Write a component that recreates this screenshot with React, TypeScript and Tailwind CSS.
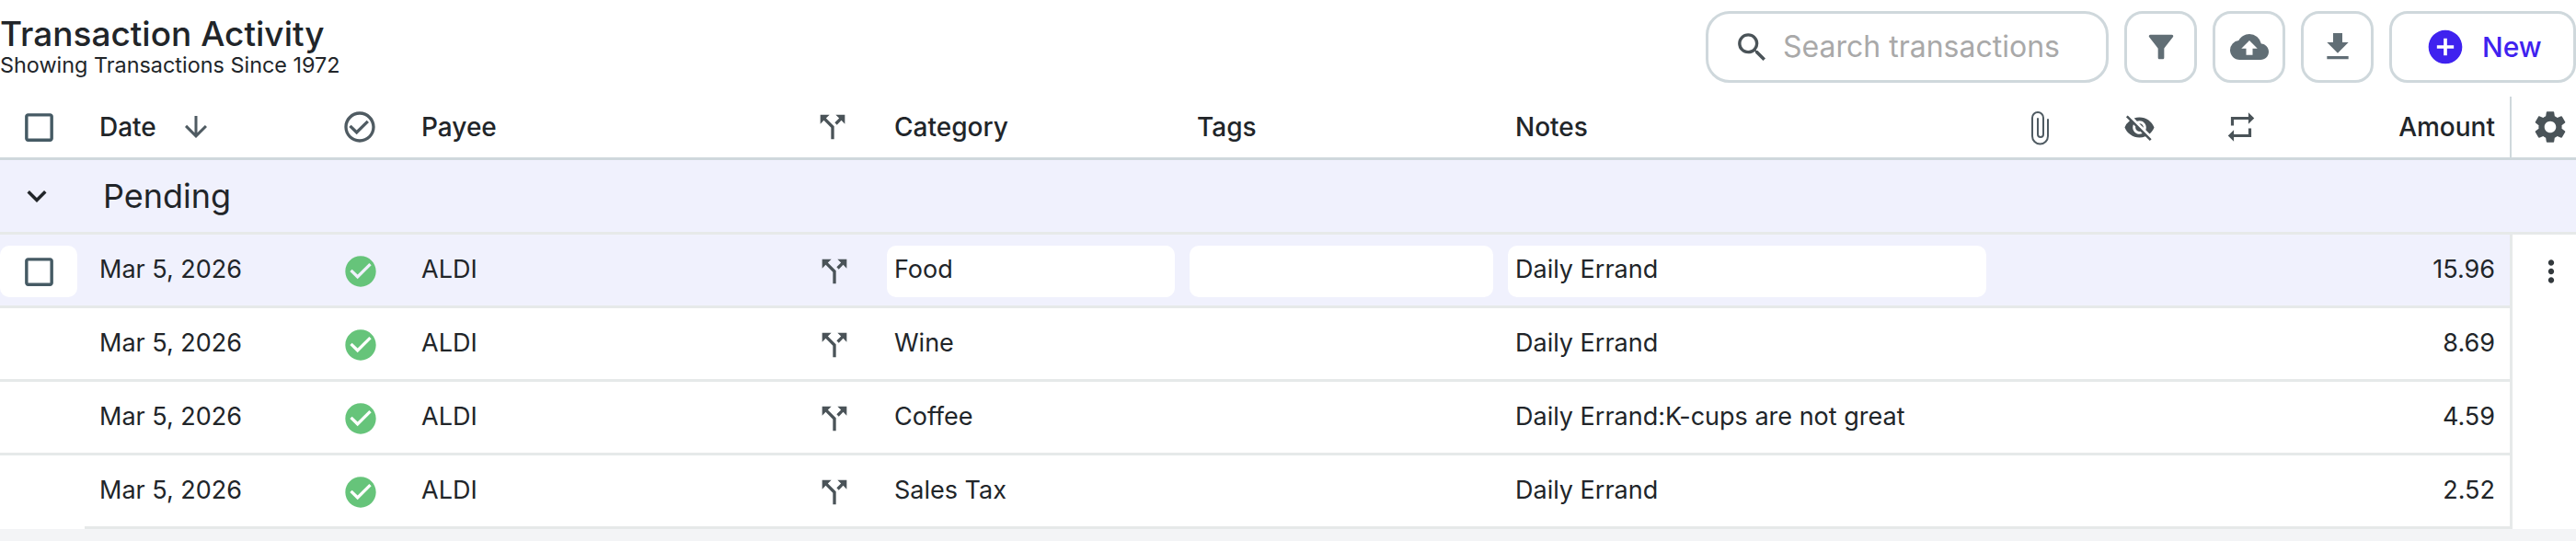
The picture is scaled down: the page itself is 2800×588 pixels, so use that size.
import React from 'react';
import {
    MdAddCircle,
    MdArrowDownward,
    MdCallSplit,
    MdCheckCircle,
    MdCheckCircleOutline,
    MdCloudUpload,
    MdExpandMore,
    MdFileDownload,
    MdFilterAlt,
    MdMoreVert,
    MdOutlineCheckBoxOutlineBlank,
    MdRepeat,
    MdSearch,
    MdSettings,
    MdVisibilityOff,
} from 'react-icons/md';

interface Row {
    category: string;
    notes: string;
    amount: string;
}

const rows: Row[] = [
    { category: 'Food', notes: 'Daily Errand', amount: '15.96' },
    { category: 'Wine', notes: 'Daily Errand', amount: '8.69' },
    { category: 'Coffee', notes: 'Daily Errand:K-cups are not great', amount: '4.59' },
    { category: 'Sales Tax', notes: 'Daily Errand', amount: '2.52' },
];

const columns =
    'grid grid-cols-[92px_268px_66px_434px_96px_329px_346px_536px_100px_116px_107px_238px_72px]';

const Paperclip: React.FC = () => (
    <svg width="21" height="38" viewBox="0 0 21 38" fill="none" stroke="#4f5b62" strokeWidth="2" strokeLinecap="round">
        <path d="M19 10v18a8.5 8.5 0 0 1-17 0V8a6 6 0 0 1 12 0v18a3 3 0 0 1-6 0V9" />
    </svg>
);

const ToolButton: React.FC<{ children: React.ReactNode }> = ({ children }) => (
    <button className="flex h-[78px] w-[79px] items-center justify-center rounded-[20px] border-[3px] border-[#cfd8dc] bg-white text-[#616e75]">
        {children}
    </button>
);

const Header: React.FC = () => (
    <div className={`${columns} h-[69px] items-center border-b-[3px] border-[#cfd8dc] text-[28px] font-medium text-[#212529]`}>
        <div className="flex justify-center pr-[8px] text-[#455a64]">
            <MdOutlineCheckBoxOutlineBlank size={41} />
        </div>
        <div className="flex items-center gap-[25px] pl-[16px]">
            Date
            <MdArrowDownward size={36} className="text-[#4f5b62]" />
        </div>
        <div className="flex justify-center pr-[4px] text-[#4f5b62]">
            <MdCheckCircleOutline size={40} />
        </div>
        <div className="pl-[32px]">Payee</div>
        <div className="flex justify-center pr-[6px] text-[#4a5358]">
            <MdCallSplit size={40} />
        </div>
        <div className="pl-[16px]">Category</div>
        <div className="pl-[16px]">Tags</div>
        <div className="pl-[16px]">Notes</div>
        <div className="flex justify-center pt-[2px]"><Paperclip /></div>
        <div className="flex justify-center text-[#4a5358]"><MdVisibilityOff size={35} /></div>
        <div className="flex justify-center pr-[2px] text-[#4a5358]"><MdRepeat size={38} /></div>
        <div className="pr-[16px] text-right">Amount</div>
        <div className="flex h-full items-center justify-center border-l-2 border-[#cfd8dc] pl-[14px] text-[#4a5358]">
            <MdSettings size={42} />
        </div>
    </div>
);

const TableRow: React.FC<{ row: Row; active: boolean; last: boolean }> = ({ row, active, last }) => (
    <div className={`${columns} relative h-[80px] items-center text-[27px] text-[#212529] ${active ? 'bg-[#f0f1fd]' : 'bg-white'}`}>
        <div className={`absolute bottom-0 right-0 h-[3px] bg-[#e6e9e9] ${last ? 'left-[92px]' : 'left-0'}`} />
        <div className="flex h-full items-center">
            {active && (
                <div className="flex h-[56px] w-[84px] items-center justify-center rounded-[10px] bg-white text-[#455a64]">
                    <MdOutlineCheckBoxOutlineBlank size={41} />
                </div>
            )}
        </div>
        <div className="pb-[3px] pl-[16px]">Mar 5, 2026</div>
        <div className="flex justify-center pr-[2px] text-[#66c47a]">
            <MdCheckCircle size={40} />
        </div>
        <div className="pb-[3px] pl-[32px]">ALDI</div>
        <div className="flex justify-center pr-[2px] text-[#4a5358]">
            <MdCallSplit size={40} />
        </div>
        <div className={`mx-[8px] flex h-[56px] items-center rounded-[10px] px-[8px] pb-[3px] ${active ? 'bg-white' : ''}`}>{row.category}</div>
        <div className={`mx-[8px] h-[56px] rounded-[10px] ${active ? 'bg-white' : ''}`} />
        <div className={`mx-[8px] flex h-[56px] items-center rounded-[10px] px-[8px] pb-[3px] ${active ? 'bg-white' : ''}`}>{row.notes}</div>
        <div />
        <div />
        <div />
        <div className="pb-[3px] pr-[16px] text-right">{row.amount}</div>
        <div className="z-10 flex h-full items-center justify-center border-l-[3px] border-[#e6e9e9] bg-white pl-[14px] text-[#33393d]">
            {active && <MdMoreVert size={38} />}
        </div>
    </div>
);

const App: React.FC = () => {
    return (
        <div className="min-h-[588px] w-[2800px] overflow-hidden bg-[#f3f4f6] font-['Inter',sans-serif]">
            <div className="bg-white">
                <div className="flex h-[105px] items-start justify-between pt-[12px]">
                    <div className="pt-[3px] text-[#212529]">
                        <div className="text-[37px] font-medium leading-[43px]">Transaction Activity</div>
                        <div className="text-[23.4px] leading-[26px]">Showing Transactions Since 1972</div>
                    </div>
                    <div className="flex gap-[17px]">
                        <div className="flex h-[78px] w-[438px] items-center gap-[13px] rounded-[26px] border-[3px] border-[#cfd8dc] pl-[27px]">
                            <MdSearch size={41} className="text-[#4a5358]" />
                            <input
                                className="w-[340px] bg-transparent text-[32px] text-[#212529] outline-none placeholder:text-[#a9a9a9]"
                                placeholder="Search transactions"
                            />
                        </div>
                        <ToolButton><MdFilterAlt size={40} /></ToolButton>
                        <ToolButton><MdCloudUpload size={42} /></ToolButton>
                        <ToolButton><MdFileDownload size={40} /></ToolButton>
                        <button className="flex h-[78px] w-[203px] items-center gap-[18px] rounded-[20px] border-[3px] border-[#cfd8dc] pl-[36px] text-[30px] font-medium text-[#3f22ef]">
                            <MdAddCircle size={44} />
                            New
                        </button>
                    </div>
                </div>
                <Header />
                <div className="flex h-[81px] items-center border-b-[3px] border-[#e6e9e9] bg-[#f0f1fd] text-[36px] text-[#212529]">
                    <div className="flex w-[80px] justify-center text-[#212529]">
                        <MdExpandMore size={42} />
                    </div>
                    <div className="pl-[32px]">Pending</div>
                </div>
                {rows.map((row, i) => (
                    <TableRow key={row.category} row={row} active={i === 0} last={i === rows.length - 1} />
                ))}
            </div>
        </div>
    );
};

export default App;
